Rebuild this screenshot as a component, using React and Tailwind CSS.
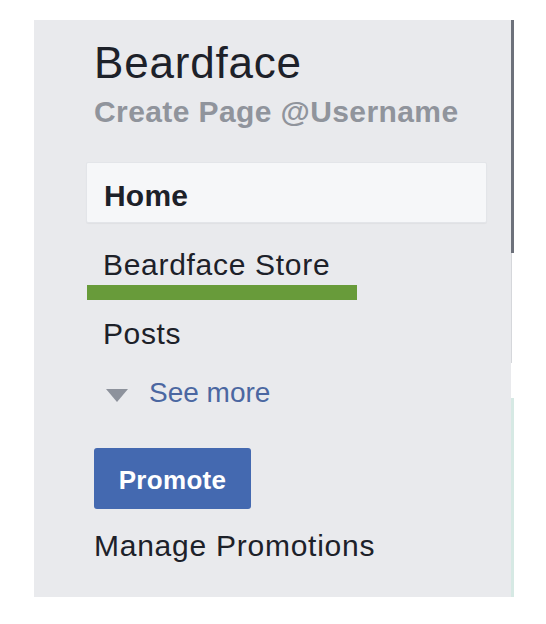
export default function App() {
  return (
    <div className="min-h-[624px] w-[546px] bg-white pt-[20px] pl-[34px]" style={{ fontFamily: '"Liberation Sans", Arial, sans-serif' }}>
      <div className="flex w-[480px]">
        <div className="w-[477px] bg-[#e9eaed] pl-[60px] pt-[21px] pb-[36px]">
          <div className="text-[44px] leading-[44px] tracking-[0.8px] text-[#1d2129]">Beardface</div>
          <div className="mt-[12px] text-[30px] leading-[30px] font-bold tracking-[0.4px] text-[#90949c]">Create Page @Username</div>

          <div className="ml-[-8px] mt-[35px] h-[61px] w-[401px] rounded-[2px] border border-[#e3e5e9] bg-[#f6f7f9] pl-[17px] pt-[18px] shadow-[0_1px_1px_rgba(0,0,0,0.04)]">
            <div className="text-[30px] leading-[30px] font-bold tracking-[0.2px] text-[#1d2129]">Home</div>
          </div>

          <div className="ml-[-8px] mt-[27px] pl-[17px] text-[30px] leading-[30px] tracking-[0.7px] text-[#1d2129]">Beardface Store</div>
          <div className="ml-[-7px] mt-[5px] h-[15px] w-[270px] bg-[#689b3a]"></div>

          <div className="ml-[-8px] mt-[19px] pl-[17px] text-[30px] leading-[30px] tracking-[0.6px] text-[#1d2129]">Posts</div>

          <div className="ml-[-8px] mt-[30px] flex h-[28px] items-start pl-[20px]">
            <svg width="22" height="13" viewBox="0 0 22 13" className="mt-[10px]">
              <polygon points="0,0 22,0 11,13" fill="#8d929c" />
            </svg>
            <span className="ml-[21px] text-[28px] leading-[28px] text-[#4b67a1]">See more</span>
          </div>

          <div className="mt-[41px] flex h-[61px] w-[157px] items-center justify-center rounded-[3px] bg-[#4469b0] pt-[3px] text-[26px] font-bold tracking-[0.3px] text-white">
            Promote
          </div>

          <div className="mt-[22px] text-[30px] leading-[30px] tracking-[0.75px] text-[#1d2129]">Manage Promotions</div>
        </div>
        <div className="flex w-[3px] flex-col">
          <div className="h-[233px] bg-[#6d717b]"></div>
          <div className="h-[110px] border-l border-[#d5d7db] bg-white"></div>
          <div className="h-[35px]"></div>
          <div className="flex-1 bg-[#d6e9e4]"></div>
        </div>
      </div>
    </div>
  );
}
